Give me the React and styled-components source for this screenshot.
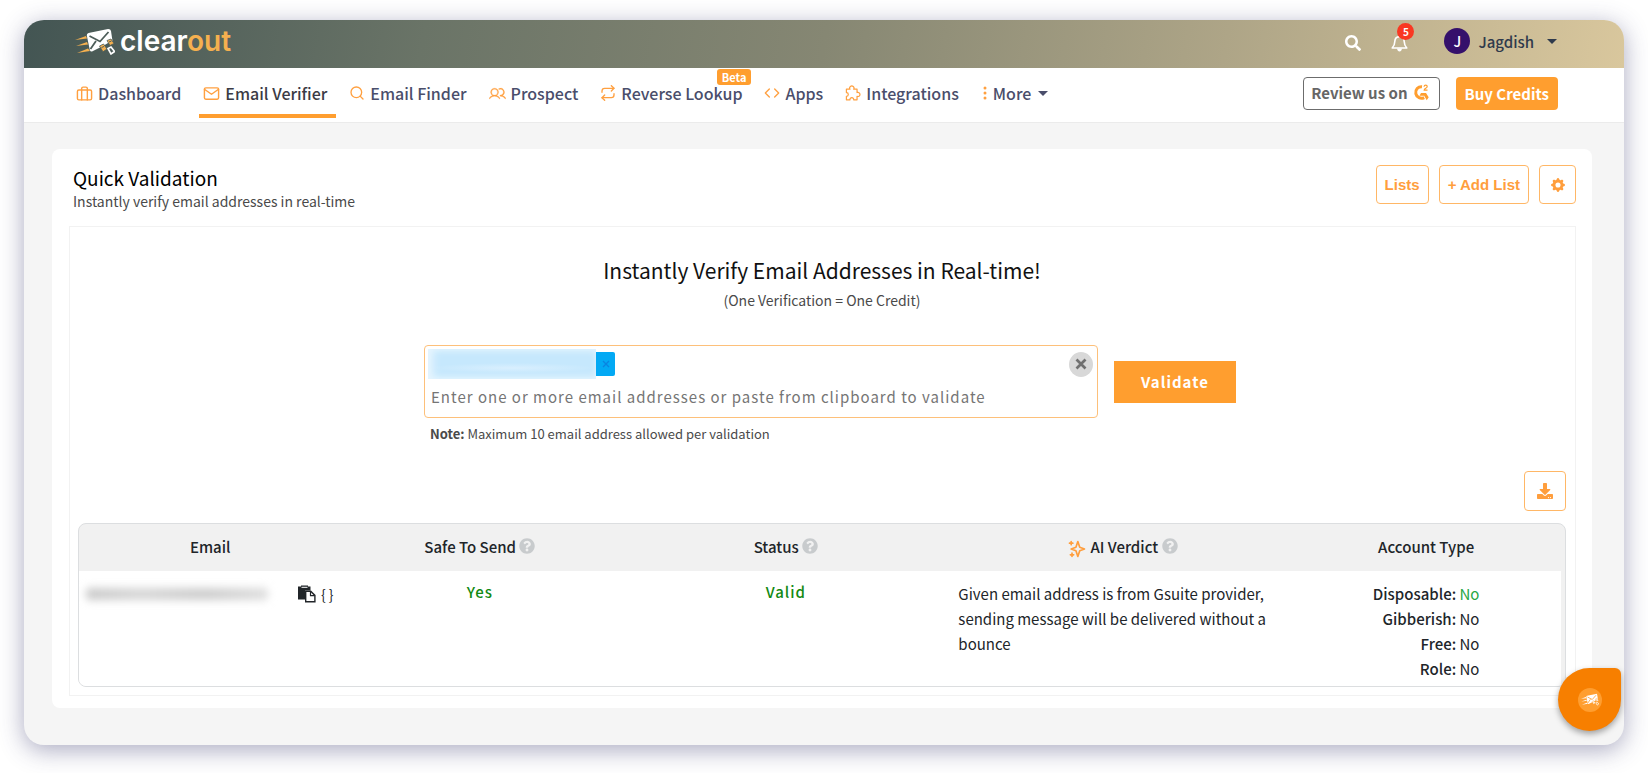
import React from 'react';
import styled, { createGlobalStyle } from 'styled-components';
import { FiBriefcase, FiMail, FiSearch, FiRepeat, FiCode } from 'react-icons/fi';
import { PiUsers } from 'react-icons/pi';
import { HiOutlineSparkles } from 'react-icons/hi';
import { BsGearFill } from 'react-icons/bs';
import { FaDownload, FaQuestionCircle, FaSearch } from 'react-icons/fa';

const navItems = [
  { label: 'Dashboard', icon: <FiBriefcase size={17} /> },
  { label: 'Email Verifier', icon: <FiMail size={17} />, active: true },
  { label: 'Email Finder', icon: <FiSearch size={16} /> },
  { label: 'Prospect', icon: <PiUsers size={17} strokeWidth={4} /> },
  { label: 'Reverse Lookup', icon: <FiRepeat size={16} />, badge: 'Beta' },
  { label: 'Apps', icon: <FiCode size={16} /> },
  { label: 'Integrations', icon: <PuzzleIcon /> },
];

const accountType = [
  { label: 'Disposable:', value: 'No', good: true },
  { label: 'Gibberish:', value: 'No' },
  { label: 'Free:', value: 'No' },
  { label: 'Role:', value: 'No' },
];

function PuzzleIcon() {
  return (
    <svg width="16" height="16" viewBox="0 0 17 17" aria-hidden="true">
      <path
        d="M1.500 4.500 H5.300 A2.300 2.300 0 1 1 9.200 4.500 H12.800 V8 A2.200 2.200 0 1 1 12.800 12 V15.800 H9.200 A2 2 0 1 0 5.300 15.800 H1.500 V12 A2 2 0 1 0 1.500 8 Z"
        fill="none"
        stroke="currentColor"
        strokeWidth="1.300"
        strokeLinejoin="round"
      />
    </svg>
  );
}

function LogoMark({ width, height, accent, shade }) {
  return (
    <svg width={width} height={height} viewBox="0 0 40 27" aria-hidden="true">
      <g fill={accent}>
        <path d="M0 12 L11 8 L12 10.500 Z" />
        <path d="M1 18 L12 14 L13 16.500 Z" />
        <path d="M2 25 L13 20.500 L15 23 Z" />
      </g>
      <path
        d="M13.500 5 L33 1 Q35.500 .8 36 3 L37.500 13 L33 15 L28 18 L17 23.500 Q15.500 24 14.800 22 L11.800 7.500 Q11.500 5.500 13.500 5 Z"
        fill="#fff"
      />
      <path d="M14.500 8 L25 13.500 L33.500 4 M15.500 21 L21 13" fill="none" stroke={shade} strokeWidth="1.800" />
      <path d="M24.500 18 l4-2 3.500 5 -4 2.800 z" fill={accent} stroke={shade} strokeWidth=".8" />
      <path d="M32 12.500 l4-1.500 3 4.500 -4 2 z" fill={accent} stroke={shade} strokeWidth=".8" />
      <path d="M26.500 19.500 l2.500 -1 M34 14 l2.500 -1" stroke={shade} />
      <path d="M33 20.500 l3-1.500 3.500 4.500 -3.500 2.500 z" fill={shade} stroke="#fff" strokeWidth="1.600" />
    </svg>
  );
}

function BellIcon() {
  return (
    <svg width="17" height="18" viewBox="0 0 17 18" aria-hidden="true">
      <path
        d="M1.200 14 Q3.700 11.500 3.800 7.500 Q4 2.800 8.500 2.600 Q13 2.800 13.200 7.500 Q13.300 11.500 15.800 14 Z"
        fill="none"
        stroke="#fff"
        strokeWidth="1.600"
        strokeLinejoin="round"
      />
      <path d="M6 14.500 h5 q-.5 3 -2.500 3 t-2.500-3 z" fill="#fff" />
    </svg>
  );
}

function G2Icon() {
  return (
    <svg width="16" height="17" viewBox="0 0 16 17" aria-hidden="true">
      <path d="M9 2.700 A5.800 5.800 0 1 0 11.200 13.600" fill="none" stroke="#ff9e2f" strokeWidth="3" />
      <path d="M8 9 h5 l2.700 4.300 -2 3 -2.500-4.500 h-4.700 z" fill="#ff9e2f" />
      <path
        d="M11 2.700 q.2-1.600 1.700-1.600 q1.500 0 1.500 1.300 q0 1-1.500 1.800 q-1.400 .8-1.500 1.900 h3.300"
        fill="none"
        stroke="#ff9e2f"
        strokeWidth="1.200"
      />
    </svg>
  );
}

function PasteIcon() {
  return (
    <svg width="18" height="18" viewBox="0 0 18 18" aria-hidden="true">
      <path d="M0 1.500 h3 v-1 h7 v1 h2.500 v4 h-5.500 v9 h-7 z" fill="#212529" />
      <path d="M3.500 2.300 h6" stroke="#fff" strokeWidth="1" />
      <path d="M7.700 6.200 h5 l4.200 4.200 v6.300 h-9.200 z" fill="#fff" stroke="#212529" strokeWidth="1.400" />
      <path d="M12.500 6.500 v4.200 h4.200" fill="none" stroke="#212529" strokeWidth="1.200" />
    </svg>
  );
}

function CrossIcon({ size, color, weight }) {
  return (
    <svg width={size} height={size} viewBox="0 0 12 12" aria-hidden="true">
      <path d="M1.500 1.500 L10.500 10.500 M10.500 1.500 L1.500 10.500" stroke={color} strokeWidth={weight} />
    </svg>
  );
}

export default function App() {
  return (
    <>
      <GlobalStyle />
      <SDWindow>
        <SDTopBar>
          <SDLogo href="#home">
            <LogoMark width={40} height={27} accent="#f5b04f" shade="#4d5d59" />
            <SDLogoText>
              clear<span>out</span>
            </SDLogoText>
          </SDLogo>
          <SDTopActions>
            <SDIconButton aria-label="Search">
              <FaSearch size={16} />
            </SDIconButton>
            <SDIconButton aria-label="Notifications">
              <BellIcon />
              <SDCount>5</SDCount>
            </SDIconButton>
            <SDUser>
              <SDAvatar>J</SDAvatar>
              Jagdish
              <SDCaret $gap={13} />
            </SDUser>
          </SDTopActions>
        </SDTopBar>

        <SDNavbar>
          <SDNavList>
            {navItems.map((item) => (
              <SDNavItem key={item.label} href="#nav" $active={item.active}>
                {item.icon}
                {item.label}
                {item.badge && <SDBeta>{item.badge}</SDBeta>}
              </SDNavItem>
            ))}
            <SDNavItem as="button">
              <svg width="7" height="14" viewBox="0 0 7 14" aria-hidden="true">
                <circle cx="4" cy="2" r="1.500" fill="currentColor" />
                <circle cx="4" cy="7" r="1.500" fill="currentColor" />
                <circle cx="4" cy="12" r="1.500" fill="currentColor" />
              </svg>
              More
              <SDCaret $gap={2} />
            </SDNavItem>
          </SDNavList>
          <SDReviewButton>
            Review us on <G2Icon />
          </SDReviewButton>
          <SDBuyButton>Buy Credits</SDBuyButton>
        </SDNavbar>

        <SDContent>
          <SDCard>
            <SDCardHeader>
              <div>
                <SDTitle>Quick Validation</SDTitle>
                <SDSubtitle>Instantly verify email addresses in real-time</SDSubtitle>
              </div>
              <SDCardActions>
                <SDOutlineButton>Lists</SDOutlineButton>
                <SDOutlineButton>+ Add List</SDOutlineButton>
                <SDOutlineButton $icon aria-label="Settings">
                  <BsGearFill size={14} />
                </SDOutlineButton>
              </SDCardActions>
            </SDCardHeader>

            <SDPanel>
              <SDHeading>Instantly Verify Email Addresses in Real-time!</SDHeading>
              <SDHint>(One Verification = One Credit)</SDHint>
              <SDForm onSubmit={(e) => e.preventDefault()}>
                <SDEmailBox>
                  <SDTagRow>
                    <SDTag>
                      <SDTagText />
                      <SDTagRemove type="button" aria-label="Remove email">
                        <CrossIcon size={8} color="#0a84e0" weight={2} />
                      </SDTagRemove>
                    </SDTag>
                    <SDClear type="button" aria-label="Clear all">
                      <CrossIcon size={12} color="#707070" weight={2.7} />
                    </SDClear>
                  </SDTagRow>
                  <SDEmailInput
                    aria-label="Email addresses"
                    placeholder="Enter one or more email addresses or paste from clipboard to validate"
                  />
                </SDEmailBox>
                <SDValidate type="submit">Validate</SDValidate>
                <SDNote>
                  <b>Note:</b> Maximum 10 email address allowed per validation
                </SDNote>
              </SDForm>

              <SDDownloadRow>
                <SDOutlineButton $icon $large aria-label="Download results">
                  <FaDownload size={16} />
                </SDOutlineButton>
              </SDDownloadRow>

              <SDTableWrap>
                <SDTable>
                  <colgroup>
                    <SDCol $width={17.7} />
                    <SDCol $width={18.7} />
                    <SDCol $width={22.6} />
                    <SDCol $width={22.8} />
                    <SDCol $width={18.2} />
                  </colgroup>
                  <thead>
                    <tr>
                      <th>Email</th>
                      <th>
                        Safe To Send <SDHelp size={16} />
                      </th>
                      <th>
                        Status <SDHelp size={16} />
                      </th>
                      <th>
                        <SDSparkles size={20} /> AI Verdict <SDHelp size={16} />
                      </th>
                      <th>Account Type</th>
                    </tr>
                  </thead>
                  <tbody>
                    <tr>
                      <td>
                        <SDEmailCell>
                          <SDHiddenEmail />
                          <SDCellButton aria-label="Copy email">
                            <PasteIcon />
                          </SDCellButton>
                          <SDCellButton aria-label="Show JSON">{'{ }'}</SDCellButton>
                        </SDEmailCell>
                      </td>
                      <td>
                        <SDResult>Yes</SDResult>
                      </td>
                      <td>
                        <SDResult>Valid</SDResult>
                      </td>
                      <td>
                        <SDVerdict>
                          Given email address is from Gsuite provider, sending message will be delivered without a bounce
                        </SDVerdict>
                      </td>
                      <td>
                        <SDAccountList>
                          {accountType.map((item) => (
                            <SDAccountRow key={item.label} $good={item.good}>
                              <b>{item.label}</b> <span>{item.value}</span>
                            </SDAccountRow>
                          ))}
                        </SDAccountList>
                      </td>
                    </tr>
                  </tbody>
                </SDTable>
              </SDTableWrap>
            </SDPanel>
          </SDCard>
        </SDContent>

        <SDChat aria-label="Open chat">
          <SDChatCircle>
            <LogoMark width={18} height={13} accent="#fff" shade="#ff9e2f" />
          </SDChatCircle>
        </SDChat>
      </SDWindow>
    </>
  );
}

//Styled components
const GlobalStyle = createGlobalStyle`
  * {
    box-sizing: border-box;
  }
  body {
    margin: 0;
    background-color: #fff;
    color: #212529;
    font-family: 'Noto Sans CJK SC', 'Noto Sans', sans-serif;
    font-size: 14px;
    line-height: 25px;
  }
  button,
  input {
    font-family: inherit;
    margin: 0;
  }
  button {
    cursor: pointer;
  }
`;

const SDWindow = styled.div`
  position: relative;
  margin: 20px 24px 29px;
  border-radius: 20px;
  background-color: #f5f5f5;
  box-shadow: 0 5px 24px rgba(50, 50, 105, 0.42);
`;

const SDTopBar = styled.header`
  display: flex;
  align-items: center;
  justify-content: space-between;
  height: 48px;
  padding: 0 67px 6px 51px;
  border-radius: 20px 20px 0 0;
  background: linear-gradient(100deg, #435553 0%, #6a7467 25%, #868773 50%, #aea587 75%, #d9c79d 100%);
`;

const SDLogo = styled.a`
  display: flex;
  align-items: center;
  gap: 5px;
  text-decoration: none;
`;

const SDLogoText = styled.span`
  color: #fff;
  font-family: Inter, sans-serif;
  font-size: 28px;
  font-weight: 600;
  line-height: 30px;
  span {
    color: #f5b04f;
  }
`;

const SDTopActions = styled.div`
  display: flex;
  align-items: center;
  gap: 30px;
`;

const SDIconButton = styled.button`
  position: relative;
  display: flex;
  padding: 4px 0 0;
  border: 0;
  background: none;
  color: #fff;
`;

const SDCount = styled.span`
  position: absolute;
  top: -7px;
  left: 6px;
  width: 17px;
  height: 17px;
  border-radius: 50%;
  background-color: #f93822;
  font-size: 10px;
  font-weight: 700;
  line-height: 17px;
  text-align: center;
`;

const SDUser = styled.button`
  display: flex;
  align-items: center;
  padding: 0;
  margin-left: 6px;
  border: 0;
  background: none;
  color: #2f3a4c;
  font-size: 15px;
  font-weight: 500;
`;

const SDAvatar = styled.span`
  width: 26px;
  height: 26px;
  margin-right: 8px;
  border-radius: 50%;
  background-color: #35106b;
  color: #fff;
  font-size: 14px;
  line-height: 26px;
  text-align: center;
`;

const SDCaret = styled.span`
  margin-left: ${(props) => props.$gap}px;
  border-top: 5px solid currentColor;
  border-left: 5px solid transparent;
  border-right: 5px solid transparent;
`;

const SDNavbar = styled.nav`
  display: flex;
  align-items: center;
  height: 55px;
  padding: 0 66px 3px 48px;
  border-bottom: 1px solid #ebebeb;
  background-color: #fff;
`;

const SDNavList = styled.div`
  display: flex;
  flex: 1;
  align-self: stretch;
  gap: 9px;
`;

const SDNavItem = styled.a`
  position: relative;
  display: flex;
  align-items: center;
  gap: 5px;
  height: 50px;
  padding: 4px 9px 0 4px;
  border: 0;
  border-bottom: 4px solid ${(props) => (props.$active ? '#ff9e2f' : 'transparent')};
  background: none;
  color: ${(props) => (props.$active ? '#3b3b45' : '#4a4e6b')};
  font-size: 16px;
  font-weight: 500;
  text-decoration: none;
  white-space: nowrap;
  svg {
    color: #ffa040;
  }
`;

const SDBeta = styled.span`
  position: absolute;
  top: 1px;
  right: 0;
  padding: 0 5px;
  border-radius: 3px;
  background-color: #ff9e2f;
  color: #fff;
  font-size: 11px;
  font-weight: 700;
  line-height: 16px;
`;

const SDReviewButton = styled.button`
  display: flex;
  align-items: center;
  gap: 5px;
  height: 33px;
  padding: 0 10px 3px 7px;
  border: 1px solid #6c6c6c;
  border-radius: 4px;
  background-color: #fff;
  color: #666;
  font-size: 15px;
  font-weight: 700;
  white-space: nowrap;
`;

const SDBuyButton = styled.button`
  height: 33px;
  margin-left: 16px;
  padding: 0 9px;
  border: 0;
  border-radius: 4px;
  background-color: #ff9e2f;
  color: #fff;
  font-size: 15px;
  font-weight: 700;
  white-space: nowrap;
`;

const SDContent = styled.main`
  padding: 26px 32px 37px 28px;
`;

const SDCard = styled.section`
  padding: 16px 16px 12px 17px;
  border-radius: 8px;
  background-color: #fff;
`;

const SDCardHeader = styled.div`
  display: flex;
  justify-content: space-between;
  padding-left: 4px;
  margin-bottom: 15px;
`;

const SDTitle = styled.h1`
  margin: 0;
  color: #000;
  font-size: 19px;
  font-weight: 400;
  line-height: 26px;
`;

const SDSubtitle = styled.p`
  margin: 0;
  color: #4a4a4a;
  font-size: 14px;
  line-height: 20px;
`;

const SDCardActions = styled.div`
  display: flex;
  gap: 10px;
`;

const SDOutlineButton = styled.button`
  display: flex;
  align-items: center;
  justify-content: center;
  width: ${(props) => (props.$large ? '42px' : props.$icon ? '37px' : 'auto')};
  height: ${(props) => (props.$large ? '40px' : '39px')};
  padding: ${(props) => (props.$icon ? '0' : '0 8px')};
  border: 1px solid #ffb766;
  border-radius: 4px;
  background-color: #fff;
  color: #ff9e3d;
  font-family: 'Liberation Sans', Arial, sans-serif;
  font-size: 15px;
  font-weight: 700;
`;

const SDPanel = styled.div`
  padding: 29px 9px 8px 8px;
  border: 1px solid #f2f2f2;
`;

const SDHeading = styled.h2`
  margin: 0;
  color: #111;
  font-size: 21px;
  font-weight: 400;
  line-height: 28px;
  text-align: center;
`;

const SDHint = styled.p`
  margin: 4px 0 33px;
  color: #4a4a4a;
  font-size: 14px;
  line-height: 24px;
  text-align: center;
`;

const SDForm = styled.form`
  display: grid;
  grid-template-columns: minmax(0, 674px) auto;
  justify-content: center;
  align-items: center;
  column-gap: 16px;
  padding-left: 16px;
`;

const SDEmailBox = styled.div`
  padding: 4px 4px 3px 3px;
  border: 1px solid #fdc07a;
  border-radius: 4px;
  background-color: #fff;
`;

const SDTagRow = styled.div`
  display: flex;
  align-items: center;
  justify-content: space-between;
  height: 28px;
`;

const SDTag = styled.span`
  display: flex;
  align-items: center;
`;

const SDTagText = styled.span`
  width: 168px;
  height: 30px;
  background: radial-gradient(closest-side at 50% 50%, #d9effe 0%, rgba(213, 238, 254, 0) 100%) 0 14px / 100% 10px no-repeat, #c6e8fd;
  box-shadow: inset 5px 0 8px #e6f5fe, inset 0 0 6px #e3f4fe;
`;

const SDTagRemove = styled.button`
  display: flex;
  align-items: center;
  justify-content: center;
  width: 19px;
  height: 24px;
  padding: 0;
  border: 0;
  border-radius: 0 2px 2px 0;
  background-color: #03a9f4;
`;

const SDClear = styled.button`
  display: flex;
  align-items: center;
  justify-content: center;
  width: 24px;
  height: 25px;
  padding: 0;
  border: 0;
  border-radius: 50%;
  background-color: #d8d8d8;
`;

const SDEmailInput = styled.input`
  width: 100%;
  height: 36px;
  padding: 0 3px;
  border: 0;
  outline: 0;
  background: none;
  font-size: 15px;
  letter-spacing: 1px;
  &::placeholder {
    color: #757575;
    opacity: 1;
  }
`;

const SDValidate = styled.button`
  width: 122px;
  height: 42px;
  border: 0;
  background-color: #ff9e2f;
  color: #fff;
  font-size: 15px;
  font-weight: 700;
  letter-spacing: 1px;
`;

const SDNote = styled.p`
  grid-column: 1 / -1;
  margin: 6px 0 0 6px;
  color: #4a4a4a;
  font-size: 13px;
  line-height: 20px;
`;

const SDDownloadRow = styled.div`
  display: flex;
  justify-content: flex-end;
  margin: 27px 0 12px;
`;

const SDTableWrap = styled.div`
  overflow: hidden;
  padding-right: 4px;
  border: 1px solid #dcdee0;
  border-radius: 8px;
  background-color: #f1f1f1;
`;

const SDTable = styled.table`
  width: 100%;
  table-layout: fixed;
  border-collapse: collapse;
  th {
    height: 47px;
    padding: 0 0 2px;
    font-size: 15px;
    font-weight: 500;
    text-align: center;
  }
  td {
    height: 115px;
    padding: 10px 5px 4px;
    background-color: #fff;
    text-align: center;
    vertical-align: top;
  }
`;

const SDCol = styled.col`
  width: ${(props) => props.$width}%;
`;

const SDHelp = styled(FaQuestionCircle)`
  color: #c8cbcd;
  vertical-align: -1px;
`;

const SDSparkles = styled(HiOutlineSparkles)`
  color: #ff9e3d;
  vertical-align: -6px;
`;

const SDEmailCell = styled.div`
  display: flex;
  align-items: center;
  gap: 5px;
  height: 26px;
  padding-left: 2px;
`;

const SDHiddenEmail = styled.span`
  width: 182px;
  height: 12px;
  margin-right: 25px;
  border-radius: 4px;
  background: linear-gradient(90deg, #c9c9c9, #d6d6d6 30%, #cccccc 65%, #dedede);
  filter: blur(4px);
`;

const SDCellButton = styled.button`
  display: flex;
  padding: 0;
  border: 0;
  background: none;
  color: #212529;
  font-size: 14px;
  line-height: 18px;
`;

const SDResult = styled.span`
  display: block;
  color: #128a12;
  font-size: 15px;
  font-weight: 500;
  line-height: 22px;
  letter-spacing: 1px;
`;

const SDVerdict = styled.p`
  margin: 0;
  font-size: 15px;
  text-align: left;
`;

const SDAccountList = styled.ul`
  display: inline-block;
  margin: 0;
  padding: 0;
  list-style: none;
  font-size: 15px;
  text-align: right;
`;

const SDAccountRow = styled.li`
  b {
    font-weight: 500;
  }
  span {
    color: ${(props) => (props.$good ? '#28a745' : '#212529')};
  }
`;

const SDChat = styled.button`
  position: absolute;
  right: 3px;
  bottom: 14px;
  display: flex;
  align-items: center;
  justify-content: center;
  width: 63px;
  height: 63px;
  border: 0;
  border-radius: 50% 6px 50% 50%;
  background-color: #f77f00;
  box-shadow: 0 3px 6px rgba(0, 0, 0, 0.35);
`;

const SDChatCircle = styled.span`
  display: flex;
  align-items: center;
  justify-content: center;
  width: 24px;
  height: 24px;
  border-radius: 50%;
  background-color: #ff9e2f;
`;
